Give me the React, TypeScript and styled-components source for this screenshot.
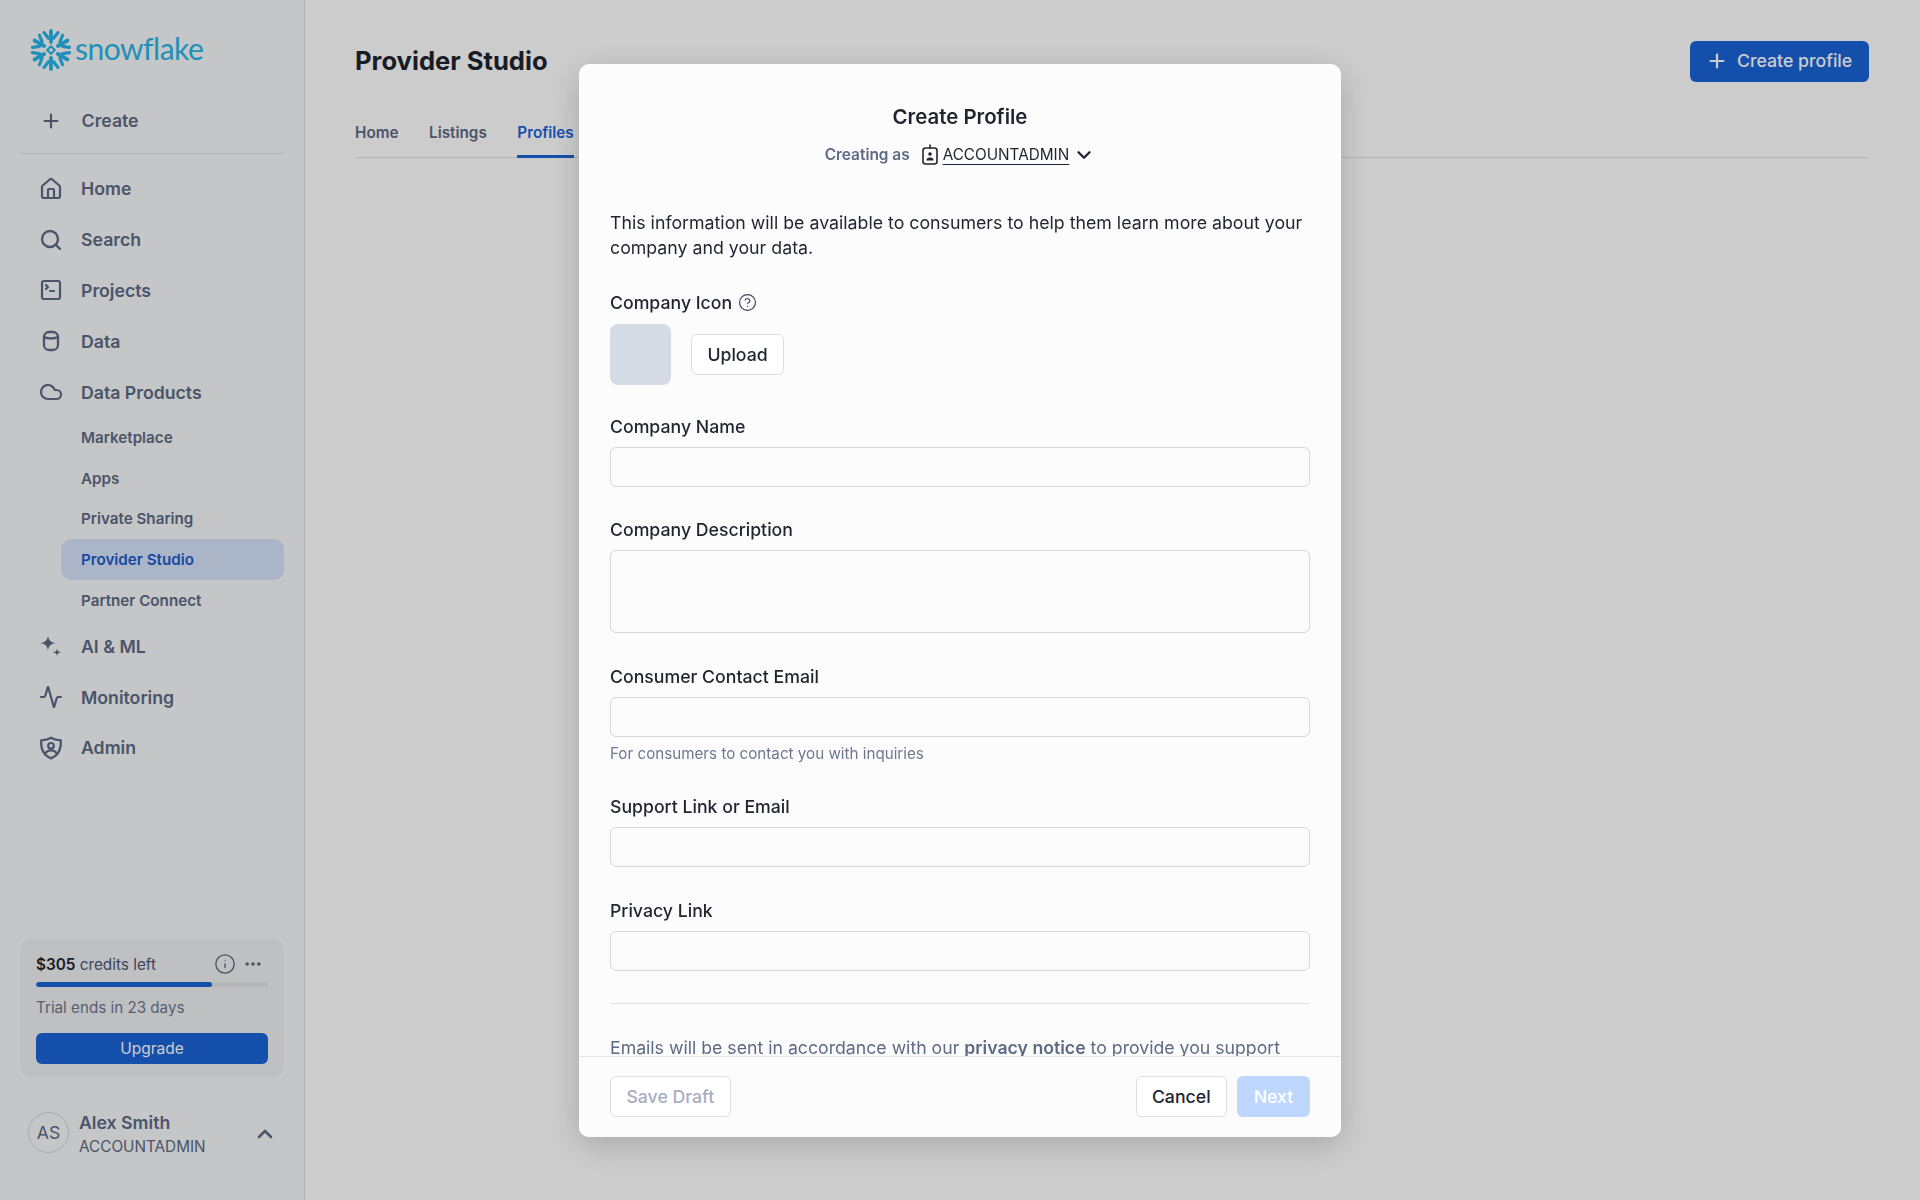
import { createGlobalStyle, styled } from "styled-components";
import {
  Activity,
  ChevronDown,
  ChevronUp,
  CircleHelp,
  Cloud,
  Ellipsis,
  House,
  Info,
  Plus,
  Search,
  SquareTerminal,
} from "lucide-react";

const GlobalStyle = createGlobalStyle`
  html, body {
    margin: 0;
    padding: 0;
    height: 100%;
    background: #ffffff;
    font-family: Inter, "Liberation Sans", sans-serif;
  }
  * {
    box-sizing: border-box;
  }
`;

const Page = styled.div`
  display: flex;
  width: 1920px;
  height: 1200px;
  overflow: hidden;
  background: #ffffff;
`;

const Sidebar = styled.aside`
  width: 305px;
  flex: none;
  height: 100%;
  background: #f7f8f9;
  border-right: 1px solid #dcdee4;
  padding: 0 20px;
  display: flex;
  flex-direction: column;
`;

const Logo = styled.div`
  display: flex;
  align-items: center;
  gap: 3px;
  height: 42px;
  margin: 29px 0 0 10px;
  color: #29b5e8;

  span {
    font-family: Lato, sans-serif;
    font-size: 30px;
    font-weight: 400;
    letter-spacing: -0.5px;
    line-height: 42px;
    margin-top: -4px;
  }
`;

const CreateRow = styled.div`
  display: flex;
  align-items: center;
  gap: 19.6px;
  height: 51px;
  margin-top: 24px;
  padding-left: 20px;
  color: #5d6a85;
  font-size: 17.7px;
  font-weight: 600;
`;

const Divider = styled.div`
  height: 1px;
  background: #e1e3e8;
  margin: 7px 0 9.5px;
`;

const NavRow = styled.div`
  display: flex;
  align-items: center;
  gap: 18px;
  height: 50.8px;
  padding-left: 19px;
  color: #5d6a85;
  font-size: 17.7px;
  font-weight: 600;

  svg {
    flex: none;
  }
`;

const SubRow = styled.div<{ $active?: boolean }>`
  display: flex;
  align-items: center;
  height: 40.7px;
  margin-left: 41px;
  padding-left: 20px;
  border-radius: 10px;
  font-size: 15.2px;
  font-weight: 600;
  color: ${({ $active }) => ($active ? "#1a5cc9" : "#5d6a85")};
  background: ${({ $active }) => ($active ? "#d6e3fb" : "transparent")};
`;

const SubList = styled.div`
  margin-top: -0.5px;
  margin-bottom: 0.5px;
`;

const CreditCard = styled.div`
  margin-top: auto;
  height: 138px;
  background: #eff0f3;
  border-radius: 10px;
  padding: 14px 16px 0;
  display: flex;
  flex-direction: column;
`;

const CreditTop = styled.div`
  display: flex;
  align-items: center;
  justify-content: space-between;
  height: 22px;
  font-size: 15.3px;
  color: #4c5670;

  b {
    font-weight: 600;
    color: #1e252f;
  }
`;

const CreditIcons = styled.div`
  display: flex;
  align-items: center;
  gap: 7px;
  margin-right: 5px;
  color: #5d6a85;
`;

const Meter = styled.div`
  height: 5px;
  margin-top: 7px;
  border-radius: 3px;
  background: #e2e4e9;
  overflow: hidden;

  div {
    height: 100%;
    border-radius: 3px;
    background: #1a63d6;
  }
`;

const TrialText = styled.div`
  margin-top: 10px;
  height: 22px;
  line-height: 22px;
  font-size: 15.2px;
  color: #6d7890;
`;

const UpgradeButton = styled.div`
  margin-top: 14px;
  height: 31px;
  border-radius: 6px;
  background: #1a63d6;
  color: #ffffff;
  font-size: 15.5px;
  font-weight: 400;
  display: flex;
  align-items: center;
  justify-content: center;
`;

const UserRow = styled.div`
  display: flex;
  align-items: center;
  height: 48px;
  margin: 31px 0 44px;
  padding-left: 8px;
`;

const Avatar = styled.div`
  width: 41px;
  height: 41px;
  border-radius: 50%;
  border: 1px solid #d3d6dd;
  display: flex;
  align-items: center;
  justify-content: center;
  color: #5d6a85;
  font-size: 17.7px;
  flex: none;
`;

const UserText = styled.div`
  margin-left: 10px;
  padding-top: 5px;
  flex: 1;

  div:first-child {
    font-size: 17.7px;
    font-weight: 600;
    line-height: 24px;
    color: #5d6a85;
  }
  div:last-child {
    font-size: 15.3px;
    line-height: 24px;
    color: #5d6a85;
  }
`;

const UserChevron = styled(ChevronUp)`
  margin: 4px 7px 0 0;
  color: #5d6a85;
`;

const Main = styled.main`
  flex: 1;
  padding: 40px 51px 0 50px;
`;

const Header = styled.div`
  display: flex;
  align-items: center;
  justify-content: space-between;
  height: 42px;
`;

const PageTitle = styled.h1`
  margin: 0 0 1px;
  font-size: 25.6px;
  font-weight: 700;
  color: #1e252f;
`;

const PrimaryButton = styled.div`
  display: flex;
  align-items: center;
  gap: 9px;
  height: 41px;
  width: 179px;
  padding: 0 0 1px 16px;
  border-radius: 6px;
  background: #1a63d6;
  color: #ffffff;
  font-size: 17.7px;
  font-weight: 500;
`;

const Tabs = styled.div`
  display: flex;
  gap: 30.5px;
  height: 35px;
  margin-top: 41px;
  border-bottom: 1px solid #dfe1e6;
`;

const Tab = styled.div<{ $active?: boolean }>`
  height: 35px;
  font-size: 15.3px;
  font-weight: 600;
  line-height: 20px;
  color: ${({ $active }) => ($active ? "#1a63d6" : "#5d6a85")};
  border-bottom: ${({ $active }) => ($active ? "3px solid #1a63d6" : "0")};
`;

const Overlay = styled.div`
  position: fixed;
  inset: 0;
  background: rgba(0, 0, 0, 0.2);
  display: flex;
  align-items: center;
  justify-content: center;
`;

const Modal = styled.div`
  width: 762px;
  height: 1073px;
  background: #fcfcfd;
  border-radius: 10px;
  box-shadow: 0 8px 32px rgba(0, 0, 0, 0.18);
  display: flex;
  flex-direction: column;
  overflow: hidden;
`;

const ModalBody = styled.div`
  flex: 1;
  min-height: 0;
  overflow: hidden;
  padding: 40px 31px 0;
`;

const ModalTitle = styled.h2`
  margin: 0;
  text-align: center;
  font-size: 20.4px;
  font-weight: 600;
  line-height: 26px;
  color: #1e252f;
`;

const CreatingAs = styled.div`
  display: flex;
  align-items: center;
  justify-content: center;
  gap: 4px;
  height: 24px;
  margin-top: 13px;
  font-size: 15.3px;
  color: #1e252f;

  em {
    font-style: normal;
    font-size: 15.4px;
    font-weight: 600;
    color: #5d6a85;
    margin-right: 7px;
  }
  u {
    text-underline-offset: 4px;
    text-decoration-thickness: 1px;
  }
`;

const Intro = styled.p`
  margin: 43px 0 0;
  font-size: 17.75px;
  line-height: 25px;
  color: #1e252f;
`;

const Label = styled.div<{ $gap?: number }>`
  display: flex;
  align-items: center;
  gap: 6px;
  height: 22px;
  margin-top: ${({ $gap }) => $gap ?? 0}px;
  font-size: 17.7px;
  font-weight: 500;
  color: #1e252f;

  svg {
    color: #3c4558;
  }
`;

const IconRow = styled.div`
  display: flex;
  align-items: center;
  gap: 20px;
  margin-top: 10px;
`;

const IconBox = styled.div`
  width: 61px;
  height: 61px;
  border-radius: 8px;
  background: #d5dbe5;
`;

const OutlineButton = styled.div<{ $muted?: boolean }>`
  display: flex;
  align-items: center;
  justify-content: center;
  height: 41px;
  padding: 0 15.4px;
  border: 1px solid #dcdee4;
  border-radius: 6px;
  background: #ffffff;
  font-size: 17.7px;
  font-weight: 500;
  color: ${({ $muted }) => ($muted ? "#a7adc3" : "#1e252f")};
`;

const Input = styled.div<{ $tall?: boolean }>`
  height: ${({ $tall }) => ($tall ? "83px" : "40px")};
  margin-top: 10px;
  border: 1px solid #d4d7e0;
  border-radius: 6px;
  background: #fcfcfd;
`;

const Help = styled.div`
  margin-top: 7px;
  height: 20px;
  line-height: 20px;
  font-size: 15.2px;
  color: #6d7890;
`;

const Rule = styled.div`
  height: 1px;
  margin-top: 32px;
  background: #dfe1ea;
`;

const Legal = styled.p`
  margin: 31px 0 0;
  font-size: 17.7px;
  line-height: 25px;
  color: #5d6a85;

  b {
    font-weight: 600;
  }
`;

const Footer = styled.div`
  flex: none;
  height: 81px;
  display: flex;
  align-items: flex-start;
  justify-content: space-between;
  padding: 19px 31px 0;
  background: #fcfcfd;
  border-top: 1px solid #e4e6ea;
`;

const FooterActions = styled.div`
  display: flex;
  gap: 10px;
`;

const NextButton = styled.div`
  display: flex;
  align-items: center;
  justify-content: center;
  width: 73px;
  height: 41px;
  border-radius: 6px;
  background: #bdd7ff;
  color: #ffffff;
  font-size: 17.7px;
  font-weight: 500;
`;

const SnowflakeMark = () => (
  <svg width="42" height="42" viewBox="-21 -21 42 42" fill="none" stroke="currentColor" strokeLinecap="round">
    {[0, 60, 120, 180, 240, 300].map((a) => (
      <g key={a} transform={`rotate(${a})`}>
        <path d="M0 -8 L0 -19" strokeWidth="3.8" />
        <path d="M-7 -17.4 L-2.6 -11.8 M7 -17.4 L2.6 -11.8" strokeWidth="3.2" />
      </g>
    ))}
    <path d="M0 -3.8 L3.8 0 L0 3.8 L-3.8 0 Z" strokeWidth="2" />
  </svg>
);

const SparkIcon = () => (
  <svg width="24" height="24" viewBox="0 0 20 20" fill="currentColor">
    <path d="M7.5 1 C8 5 9.5 6.8 13.8 7.5 C9.5 8.2 8 10 7.5 14 C7 10 5.5 8.2 1.2 7.5 C5.5 6.8 7 5 7.5 1 Z" />
    <path d="M15 12 C15.2 14 16 14.8 18.5 15.2 C16 15.6 15.2 16.4 15 18.5 C14.8 16.4 14 15.6 11.5 15.2 C14 14.8 14.8 14 15 12 Z" />
  </svg>
);

const DataIcon = () => (
  <svg width="24" height="24" viewBox="0 0 24 24" fill="none" stroke="currentColor" strokeWidth="2.3" strokeLinecap="round">
    <rect x="5" y="3" width="14" height="18" rx="5" />
    <path d="M5 7.5 C7 10 17 10 19 7.5" />
  </svg>
);

const AdminIcon = () => (
  <svg width="24" height="24" viewBox="0 0 22 22" fill="none" stroke="currentColor" strokeWidth="2" strokeLinecap="round" strokeLinejoin="round">
    <path d="M11 1.5 C13.5 3.2 16.5 3.8 20 4 C20.5 12 17.5 18 11 20.5 C4.5 18 1.5 12 2 4 C5.5 3.8 8.5 3.2 11 1.5 Z" />
    <circle cx="11" cy="9" r="2.6" />
    <path d="M5.8 16 C7 13.8 9 13.2 11 13.2 C13 13.2 15 13.8 16.2 16" />
  </svg>
);

const BadgeIcon = () => (
  <svg width="18" height="21" viewBox="0 0 18 21" fill="none" stroke="#1e252f" strokeWidth="1.6" strokeLinecap="round">
    <rect x="2" y="4" width="14" height="16" rx="2.5" />
    <path d="M9 1 L9 4" />
    <circle cx="9" cy="10" r="1.8" fill="#1e252f" stroke="none" />
    <path d="M5.5 16.5 C5.5 14 7 13.4 9 13.4 C11 13.4 12.5 14 12.5 16.5 Z" fill="#1e252f" stroke="none" />
  </svg>
);

const navTop = [
  { label: "Home", icon: <House size={24} strokeWidth={2.2} /> },
  { label: "Search", icon: <Search size={24} strokeWidth={2.3} /> },
  { label: "Projects", icon: <SquareTerminal size={24} strokeWidth={2.2} /> },
  { label: "Data", icon: <DataIcon /> },
  { label: "Data Products", icon: <Cloud size={24} strokeWidth={2.2} /> },
];

const subItems = ["Marketplace", "Apps", "Private Sharing", "Provider Studio", "Partner Connect"];

const navBottom = [
  { label: "AI & ML", icon: <SparkIcon /> },
  { label: "Monitoring", icon: <Activity size={24} strokeWidth={2.2} /> },
  { label: "Admin", icon: <AdminIcon /> },
];

export default function App() {
  return (
    <Page>
      <GlobalStyle />
      <Sidebar>
        <Logo>
          <SnowflakeMark />
          <span>snowflake</span>
        </Logo>
        <CreateRow>
          <Plus size={22} strokeWidth={2.4} />
          Create
        </CreateRow>
        <Divider />
        {navTop.map((item) => (
          <NavRow key={item.label}>
            {item.icon}
            {item.label}
          </NavRow>
        ))}
        <SubList>
          {subItems.map((name) => (
            <SubRow key={name} $active={name === "Provider Studio"}>
              {name}
            </SubRow>
          ))}
        </SubList>
        {navBottom.map((item) => (
          <NavRow key={item.label}>
            {item.icon}
            {item.label}
          </NavRow>
        ))}
        <CreditCard>
          <CreditTop>
            <span>
              <b>$305</b> credits left
            </span>
            <CreditIcons>
              <Info size={22} strokeWidth={1.5} />
              <Ellipsis size={20} strokeWidth={2.4} />
            </CreditIcons>
          </CreditTop>
          <Meter>
            <div style={{ width: "76%" }} />
          </Meter>
          <TrialText>Trial ends in 23 days</TrialText>
          <UpgradeButton>Upgrade</UpgradeButton>
        </CreditCard>
        <UserRow>
          <Avatar>AS</Avatar>
          <UserText>
            <div>Alex Smith</div>
            <div>ACCOUNTADMIN</div>
          </UserText>
          <UserChevron size={24} strokeWidth={2.6} />
        </UserRow>
      </Sidebar>
      <Main>
        <Header>
          <PageTitle>Provider Studio</PageTitle>
          <PrimaryButton>
            <Plus size={22} strokeWidth={2.4} />
            Create profile
          </PrimaryButton>
        </Header>
        <Tabs>
          <Tab>Home</Tab>
          <Tab>Listings</Tab>
          <Tab $active>Profiles</Tab>
        </Tabs>
      </Main>
      <Overlay>
        <Modal>
          <ModalBody>
            <ModalTitle>Create Profile</ModalTitle>
            <CreatingAs>
              <em>Creating as</em>
              <BadgeIcon />
              <u>ACCOUNTADMIN</u>
              <ChevronDown size={22} strokeWidth={2.6} />
            </CreatingAs>
            <Intro>
              This information will be available to consumers to help them learn more about your company and your
              data.
            </Intro>
            <Label $gap={32}>
              Company Icon
              <CircleHelp size={19} strokeWidth={1.5} />
            </Label>
            <IconRow>
              <IconBox />
              <OutlineButton>Upload</OutlineButton>
            </IconRow>
            <Label $gap={30.5}>Company Name</Label>
            <Input />
            <Label $gap={31}>Company Description</Label>
            <Input $tall />
            <Label $gap={32}>Consumer Contact Email</Label>
            <Input />
            <Help>For consumers to contact you with inquiries</Help>
            <Label $gap={31}>Support Link or Email</Label>
            <Input />
            <Label $gap={32}>Privacy Link</Label>
            <Input />
            <Rule />
            <Legal>
              Emails will be sent in accordance with our <b>privacy notice</b> to provide you support
            </Legal>
          </ModalBody>
          <Footer>
            <OutlineButton $muted>Save Draft</OutlineButton>
            <FooterActions>
              <OutlineButton>Cancel</OutlineButton>
              <NextButton>Next</NextButton>
            </FooterActions>
          </Footer>
        </Modal>
      </Overlay>
    </Page>
  );
}
